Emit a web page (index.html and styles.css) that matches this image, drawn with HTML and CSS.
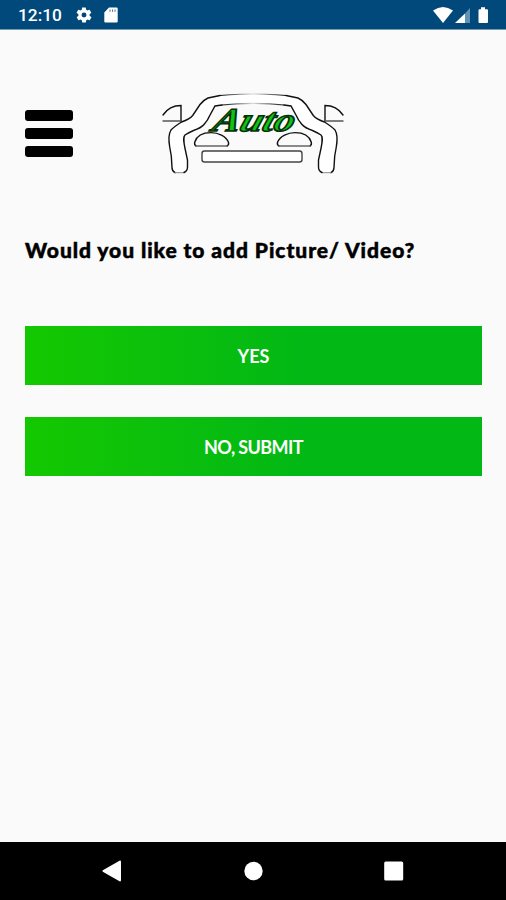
FILE: index.html
```
<!DOCTYPE html>
<html lang="en">
<head>
  <meta charset="UTF-8" />
  <meta name="viewport" content="width=device-width, initial-scale=1" />
  <title>Auto</title>
  <link rel="stylesheet" href="styles.css">
</head>
<body>

  <div class="status-bar">
    <span class="clock">12:10</span>
    <svg class="icon-gear" width="18" height="18" viewBox="0 0 24 24">
      <path fill="#fff" d="M19.4 13c0-.3.1-.6.1-1s0-.7-.1-1l2.1-1.6c.2-.2.3-.4.1-.7l-2-3.4c-.1-.2-.4-.3-.6-.2l-2.500 1c-.5-.4-1.100-.7-1.700-1l-.4-2.600c0-.3-.2-.5-.5-.5h-4c-.2 0-.4.2-.5.4l-.4 2.700c-.6.2-1.100.6-1.700 1l-2.500-1c-.2-.1-.5 0-.6.2l-2 3.400c-.1.3-.1.5.1.7L4.600 11c-.1.3-.1.6-.1 1s0 .7.1 1l-2.100 1.600c-.2.2-.3.4-.1.7l2 3.400c.1.2.4.3.6.2l2.500-1c.5.4 1.100.7 1.700 1l.4 2.600c.1.3.3.5.5.5h4c.3 0 .5-.2.5-.5l.4-2.600c.6-.3 1.200-.6 1.700-1l2.500 1c.2.1.5 0 .6-.2l2-3.400c.2-.3.1-.5-.1-.7zM12 15.300a3.300 3.300 0 1 1 0-6.600 3.300 3.300 0 0 1 0 6.600z"/>
    </svg>
    <svg class="icon-card" width="14" height="16" viewBox="0 0 14 16">
      <path fill="#fff" d="M5 .5h7.500q1.200 0 1.200 1.200v12.600q0 1.200-1.200 1.200h-11q-1.200 0-1.200-1.200V5.500z"/>
      <path stroke="#01497a" stroke-width="1" stroke-opacity=".75" d="M6 2.500v2.300M8.500 2.500v2.300M11 2.500v2.300"/>
    </svg>
    <svg class="icon-signal" width="56" height="18" viewBox="0 0 56 18">
      <path fill="#fff" d="M0 4.500Q10 -2.500 20 4.500L10 17z"/>
      <path fill="#fff" d="M22 17L32 7.500V17z"/>
      <path fill="#5f93b5" d="M32 7.500L37 2V17h-5z"/>
      <path fill="#fff" d="M46.500 3.200h1.500V1.200h4v2h2q1 0 1 1V16q0 1-1 1h-7.500q-1 0-1-1V4.200q0-1 1-1z"/>
    </svg>
  </div>

  <main class="screen">
    <header class="header">
      <button class="menu" aria-label="Menu">
        <span></span>
        <span></span>
        <span></span>
      </button>
      <svg class="logo" width="186" height="86" viewBox="160 90 186 86">
        <defs>
          <linearGradient id="roof" gradientUnits="userSpaceOnUse" x1="208" y1="0" x2="253" y2="0">
            <stop offset="0.300" stop-color="#111"/>
            <stop offset="1" stop-color="#ddd"/>
          </linearGradient>
          <!-- left half of the car, reused mirrored for the right -->
          <g id="half" fill="none" stroke="#111" stroke-width="1.400" stroke-linecap="round">
            <path stroke="none" fill="#fff" d="M253 94H240Q216 94 208 98C200 103 199 113 192 116L174 127Q169 130 169 137L172 168Q173 173 177 173H184Q188 172 187.500 167L184 138Q184 134 193 131Q204 127 206 122L215 106Q232 103 253 103.500z"/>
            <path d="M163 115C167 109 173 105.500 181 105.500V121"/>
            <path stroke="#555" d="M181 121H163"/>
            <path d="M175 172.700Q172 171 172 167.500L171.300 156L169.700 147C168.500 140 168.500 134 171 130Q173 127.500 181.500 122Q190 119 192.700 115.500L200 104.500Q203.500 100 208 98L220 95.500"/>
            <path stroke="#888" stroke-width="1" d="M175 172.700H184"/>
            <path d="M184 172.500Q187.500 171 187.500 167V160L184.700 147C183.500 140 183 137 185 135Q188 133 193.500 130.500Q201 128 204 124.500Q208 120 209.500 116L215 106L222 105"/>
            <path stroke="url(#roof)" stroke-width="1.100" d="M220 95.500Q230 94.300 240 94.200L253 94M222 105Q236 103.500 253 103.400"/>
            <path d="M196 146Q194 145 194.800 142C197 135 204 132.600 211 132.600S226 136 228.400 142Q229.300 145 227 146"/>
            <path stroke="#666" d="M196 146H227"/>
          </g>
        </defs>
        <use href="#half"/>
        <use href="#half" transform="translate(506 0) scale(-1 1)"/>
        <rect x="202" y="151" width="100" height="11" rx="2.500" fill="#fff" stroke="#444" stroke-width="1.400"/>
        <text class="logo-text" transform="translate(211 130.500) skewX(-18)" textLength="81" lengthAdjust="spacingAndGlyphs">Auto</text>
      </svg>
    </header>

    <h1 class="question">Would you like to add Picture/ Video?</h1>

    <div class="actions">
      <button class="btn">YES</button>
      <button class="btn submit">NO, SUBMIT</button>
    </div>
  </main>

  <nav class="nav-bar">
    <svg width="20" height="22" viewBox="0 0 20 22"><path fill="#fff" d="M.8 10.200L17.500.7q1.500-.5 1.500 1v18.600q0 1.500-1.500 1L.8 11.800q-.8-.8 0-1.600z"/></svg>
    <svg width="20" height="20" viewBox="0 0 20 20"><circle cx="10.500" cy="10" r="9.200" fill="#fff"/></svg>
    <svg width="20" height="20" viewBox="0 0 20 20"><rect x=".2" y=".5" width="19" height="19" rx="1.500" fill="#fff"/></svg>
  </nav>

</body>
</html>
```

FILE: styles.css
```
* {
  box-sizing: border-box;
}
body {
  margin: 0;
  height: 900px;
  display: flex;
  flex-direction: column;
  background-color: #fafafa;
  color: #000;
  font-family: Lato, "Open Sans", sans-serif;
}
button {
  border: none;
  padding: 0;
  font-family: inherit;
  cursor: pointer;
}
.status-bar {
  height: 30px;
  display: flex;
  align-items: center;
  padding: 1px 17px 0 18px;
  background-color: #01497a;
  border-bottom: 1px solid #7798ad;
  color: #fff;
}
.clock {
  width: 57px;
  font-family: Roboto, sans-serif;
  font-size: 17.3px;
  font-weight: 500;
}
.icon-card {
  margin-left: 11px;
}
.icon-signal {
  margin-left: auto;
}
.screen {
  flex: 1;
  padding: 60px 24px 0 25px;
}
.header {
  display: flex;
  align-items: flex-start;
}
.menu {
  display: flex;
  flex-direction: column;
  gap: 7px;
  width: 48px;
  margin-top: 20px;
  background: none;
}
.menu span {
  height: 11px;
  border-radius: 3px;
  background-color: #000;
}
.logo {
  margin-left: 87px;
}
.logo-text {
  font-family: "Liberation Serif", serif;
  font-size: 33px;
  font-weight: bold;
  font-style: italic;
  fill: #0fc312;
  stroke: #06300a;
  stroke-width: 1.5px;
}
.question {
  margin: 61px 0 0;
  font-size: 21px;
  line-height: 26px;
  font-weight: 900;
  letter-spacing: 0.94px;
  white-space: nowrap;
  -webkit-text-stroke: 0.5px #000;
}
.actions {
  display: flex;
  flex-direction: column;
  gap: 32px;
  margin-top: 63px;
}
.btn {
  height: 59px;
  background: linear-gradient(to right, #14c800, #0cc00c 28%, #02b814 60%, #02b814);
  color: #fff;
  font-size: 18px;
  font-weight: 700;
}
.submit {
  letter-spacing: -0.6px;
}
.nav-bar {
  height: 58px;
  display: flex;
  justify-content: space-between;
  align-items: center;
  padding: 0 102px;
  background-color: #000;
}
```
